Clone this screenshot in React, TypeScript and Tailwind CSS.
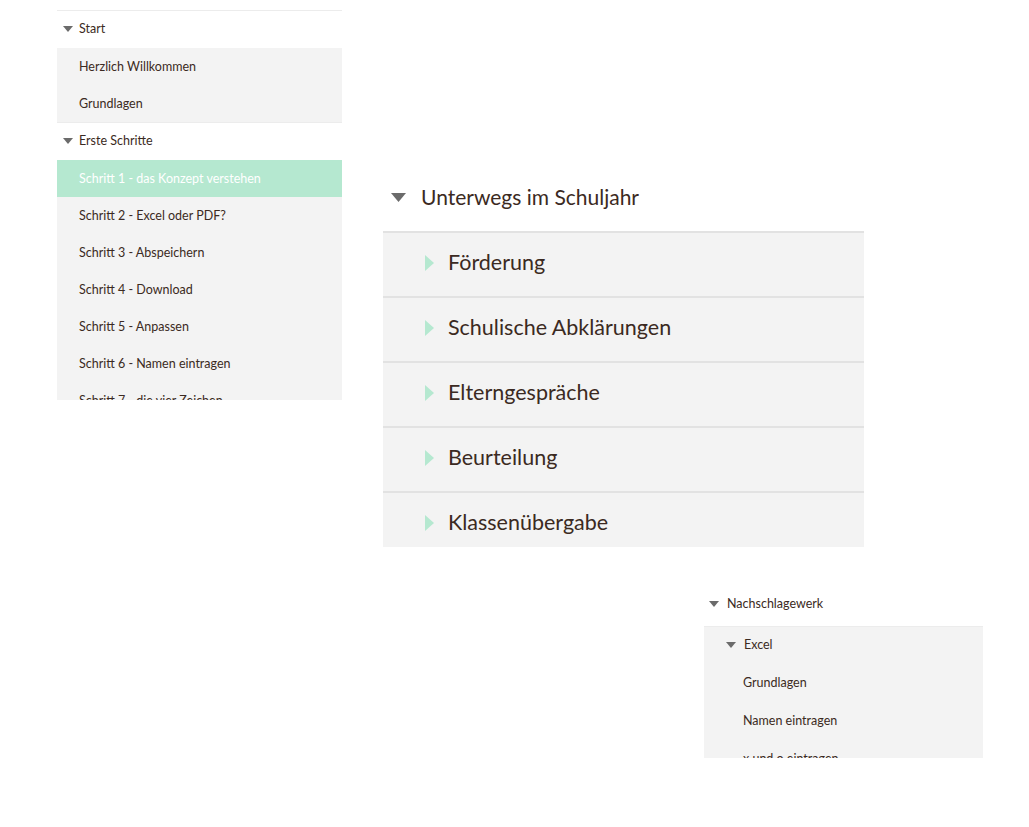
import React from "react";

const font = { fontFamily: '"Lato", "Noto Sans", sans-serif' };

function Down({ className }: { className: string }) {
  return (
    <svg viewBox="0 0 10 6" className={className}>
      <path d="M0 0 L10 0 L5 6 Z" fill="#6b6b6b" />
    </svg>
  );
}

function Right() {
  return (
    <svg viewBox="0 0 9 16" className="w-[9px] h-[16px] shrink-0">
      <path d="M0 0 L9 8 L0 16 Z" fill="#b5e8d0" />
    </svg>
  );
}

function SideHeader({ label }: { label: string }) {
  return (
    <div className="h-[38px] flex items-center pb-[1px] border-t border-[#ececec] bg-white">
      <div className="w-[22px] flex justify-end pr-[6px]">
        <Down className="w-[10px] h-[6px]" />
      </div>
      <span className="text-[12.5px] text-[#3b2a22]">{label}</span>
    </div>
  );
}

function SideItem({ label, active }: { label: string; active?: boolean }) {
  return (
    <div
      className={
        "h-[37px] flex items-center pt-[2px] pl-[22px] text-[12.5px] " +
        (active ? "bg-[#b5e8d0] text-white" : "bg-[#f3f3f3] text-[#3b2a22]")
      }
    >
      {label}
    </div>
  );
}

function Panel1() {
  return (
    <div className="w-[285px] h-[390px] overflow-hidden shrink-0" style={font}>
      <SideHeader label="Start" />
      <SideItem label="Herzlich Willkommen" />
      <SideItem label="Grundlagen" />
      <SideHeader label="Erste Schritte" />
      <SideItem label="Schritt 1 - das Konzept verstehen" active />
      <SideItem label="Schritt 2 - Excel oder PDF?" />
      <SideItem label="Schritt 3 - Abspeichern" />
      <SideItem label="Schritt 4 - Download" />
      <SideItem label="Schritt 5 - Anpassen" />
      <SideItem label="Schritt 6 - Namen eintragen" />
      <SideItem label="Schritt 7 - die vier Zeichen" />
    </div>
  );
}

function Panel2() {
  const items = [
    "Förderung",
    "Schulische Abklärungen",
    "Elterngespräche",
    "Beurteilung",
    "Klassenübergabe",
  ];
  return (
    <div className="w-[481px] mt-[168px] ml-[41px]" style={font}>
      <div className="h-[38px] mb-[15px] flex items-center">
        <div className="w-[38px] flex justify-end pr-[15px] pl-[8px]">
          <Down className="w-[16px] h-[9px]" />
        </div>
        <span className="text-[21px] text-[#3b2a22]">Unterwegs im Schuljahr</span>
      </div>
      <div className="h-[316px] overflow-hidden bg-[#f3f3f3]">
        {items.map((t) => (
          <div
            key={t}
            className="h-[65px] flex items-center pb-[4px] pl-[42px] gap-[14px] border-t-2 border-[#e2e2e2]"
          >
            <Right />
            <span className="text-[21.5px] text-[#3b2a22]">{t}</span>
          </div>
        ))}
      </div>
    </div>
  );
}

function Panel3() {
  return (
    <div className="w-[279px] ml-[704px] mt-[43px]" style={font}>
      <div className="h-[28px] mb-[8px] flex items-center">
        <div className="w-[23px] flex justify-end pr-[8px]">
          <Down className="w-[10px] h-[6px]" />
        </div>
        <span className="text-[12.5px] text-[#3b2a22]">Nachschlagewerk</span>
      </div>
      <div className="h-[132px] overflow-hidden bg-[#f3f3f3] border-t border-[#ececec]">
        <div className="h-[36px] flex items-center">
          <div className="w-[40px] flex justify-end pr-[8px]">
            <Down className="w-[10px] h-[6px]" />
          </div>
          <span className="text-[12.5px] text-[#3b2a22]">Excel</span>
        </div>
        <div className="pt-[1px]">
          {["Grundlagen", "Namen eintragen", "x und o eintragen"].map((t) => (
            <div key={t} className="h-[38px] flex items-center pl-[39px] text-[12.5px] text-[#3b2a22]">
              {t}
            </div>
          ))}
        </div>
      </div>
    </div>
  );
}

export default function App() {
  return (
    <div className="w-[1029px] h-[827px] bg-white overflow-hidden pt-[10px]">
      <div className="flex items-start ml-[57px]">
        <Panel1 />
        <Panel2 />
      </div>
      <Panel3 />
    </div>
  );
}
